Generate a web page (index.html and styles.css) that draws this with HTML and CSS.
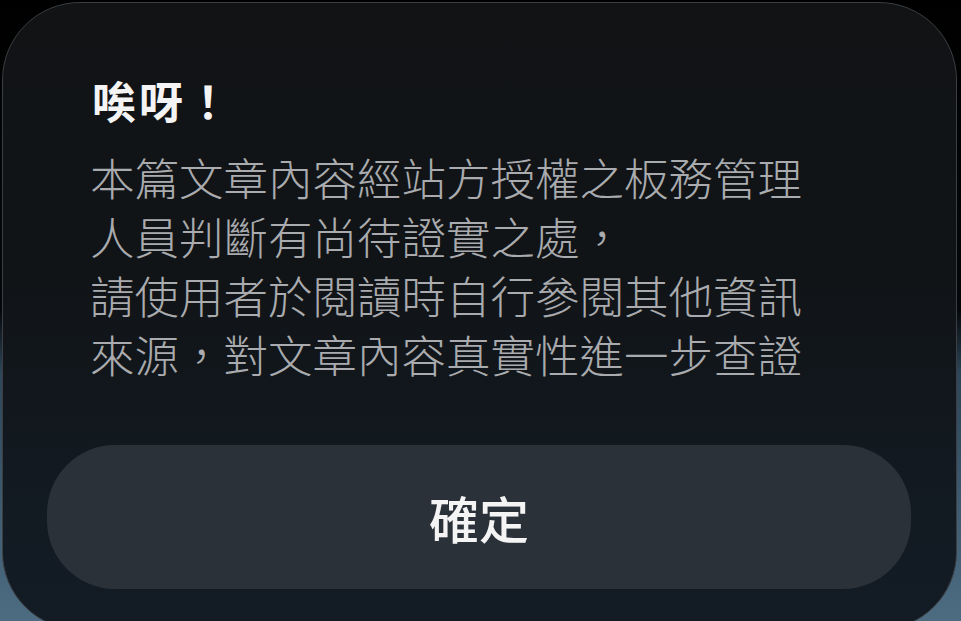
FILE: index.html
```html
<!DOCTYPE html>
<html lang="zh-Hant">
<head>
    <meta charset="UTF-8">
    <meta name="viewport" content="width=device-width, initial-scale=1.0">
    <title>唉呀！</title>
    <link rel="stylesheet" href="styles.css">
</head>
<body>
    <div class="dialog">
        <h2 class="dialog-title">唉呀！</h2>
        <p class="dialog-text">本篇文章內容經站方授權之板務管理<br>人員判斷有尚待證實之處，<br>請使用者於閱讀時自行參閱其他資訊<br>來源，對文章內容真實性進一步查證</p>
        <button class="dialog-button">確定</button>
    </div>
</body>
</html>
```

FILE: styles.css
```css
html, body {
    margin: 0;
    padding: 0;
    height: 621px;
    overflow: hidden;
}

body {
    font-family: "Noto Sans CJK TC", "Noto Sans", sans-serif;
    background: linear-gradient(to bottom, #000 0%, #05080b 50%, #2d4658 60%, #4d6c82 100%);
}

.dialog {
    box-sizing: border-box;
    margin: 2px 4px 0 2px;
    height: 628px;
    border: 1px solid #3b3e42;
    border-radius: 78px;
    background: linear-gradient(to bottom, #111315 0%, #111417 45%, #121a22 80%, #131c25 100%);
    padding: 68px 45px 0 44px;
    display: flex;
    flex-direction: column;
}

.dialog-title {
    margin: 0 0 17px 45px;
    font-size: 44px;
    line-height: 59px;
    font-weight: 700;
    letter-spacing: 3px;
    color: #f4f4f4;
}

.dialog-text {
    margin: 0 0 0 43px;
    font-size: 44.5px;
    line-height: 59px;
    font-weight: 300;
    color: #a9abae;
    white-space: nowrap;
}

.dialog-button {
    margin-top: 62px;
    height: 144px;
    border: none;
    border-radius: 68px;
    background-color: #2b3139;
    color: #f4f4f4;
    font-family: inherit;
    font-size: 50px;
    font-weight: 500;
    cursor: pointer;
}
```
